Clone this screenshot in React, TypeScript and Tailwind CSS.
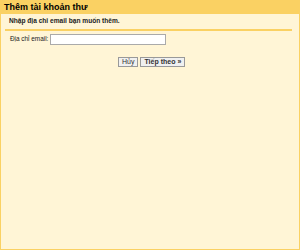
import React from "react";

export default function App() {
  return (
    <div
      className="w-[300px] h-[250px] flex flex-col bg-[#fff5d6] border border-[#fad163] overflow-hidden"
      style={{ fontFamily: '"Liberation Sans", Arial, sans-serif' }}
    >
      <div className="h-[13px] bg-[#fad163] flex items-center pl-[3px] text-[9px] font-bold text-black leading-none">
        Thêm tài khoản thư
      </div>
      <div className="flex flex-col px-[4px]">
        <div className="pt-[4px] pl-[4px] pb-[4px] text-[6.6px] font-bold text-[#222] leading-none border-b-2 border-[#fad163] mr-[3px]">
          Nhập địa chỉ email bạn muốn thêm.
        </div>
        <div className="flex items-center mt-[3px] pl-[5px] gap-[2px]">
          <span className="text-[6.4px] text-[#222] leading-none">Địa chỉ email:</span>
          <div className="w-[116px] h-[11px] bg-white border border-[#aaa]" />
        </div>
        <div className="flex gap-[2px] mt-[12px] pl-[113px]">
          <button className="h-[10px] px-[3px] text-[7px] leading-none bg-[#f0f0f0] border border-[#999] text-[#333]">
            Hủy
          </button>
          <button className="h-[10px] px-[3px] text-[7px] font-bold leading-none bg-[#f0f0f0] border border-[#999] text-[#333]">
            Tiếp theo »
          </button>
        </div>
      </div>
    </div>
  );
}
